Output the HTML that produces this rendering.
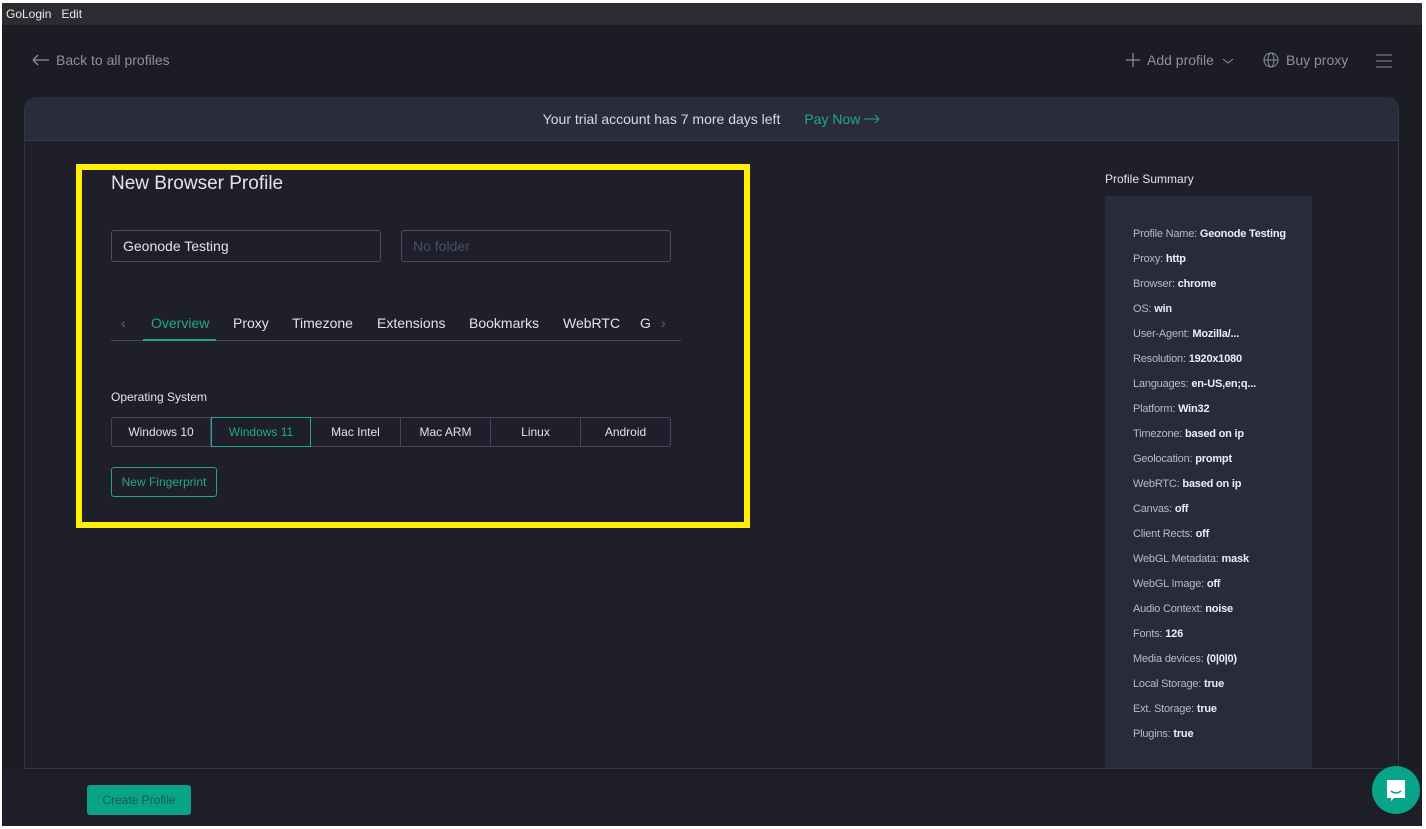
<!DOCTYPE html>
<html><head><meta charset="utf-8"><style>
*{margin:0;padding:0;box-sizing:border-box}
body{width:1426px;height:829px;overflow:hidden;background:#fff;font-family:"Liberation Sans",sans-serif;position:relative}
.app{position:absolute;left:2px;top:3px;width:1420px;height:823px;background:#1b1c24;overflow:hidden}
.tb{position:absolute;left:0;top:0;width:1420px;height:22px;background:#2b2c2f;color:#e8e8e8;font-size:12px;line-height:22px;padding-left:4px}
.tb span{margin-right:10px}
.a{position:absolute;color:#8e90a2;font-size:14px}
.card{position:absolute;left:22px;top:94px;width:1375px;height:672px;background:#1f1f2b;border:1px solid #33354a;border-top:none;border-radius:12px 12px 0 0}
.hd{position:absolute;left:0;top:0;width:100%;height:44px;background:#2a2c3b;border-bottom:1px solid #3a3c50;border-radius:12px 12px 0 0;text-align:center;color:#d8d9e0;font-size:14px;line-height:44px}
.hd b{font-weight:normal;color:#1fa88a;margin-left:24px}
.yel{position:absolute;left:74px;top:161px;width:674px;height:364px;border:6px solid #fff000}
.t{position:absolute;color:#e2e3ea}
.inp{position:absolute;height:32px;border:1px solid #4a4c60;border-radius:3px;font-size:14px;line-height:30px;padding-left:11px}
.tabs{position:absolute;left:111px;top:310px;width:570px;height:31px;border-bottom:1px solid #44465a;font-size:14px;color:#e2e3ea}
.tabs span{position:absolute;top:5px}
.os{position:absolute;left:111px;top:417px;width:560px;height:30px;border:1px solid #45475c;border-radius:3px;display:flex;font-size:12px;color:#e2e3ea}
.os div{border-right:1px solid #45475c;text-align:center;line-height:28px}
.sum{position:absolute;left:1105px;top:196px;width:207px;height:572px;background:#2a2b3a;font-size:11px;color:#b8bac6;letter-spacing:-0.2px}
.sum p{position:absolute;left:28px;white-space:nowrap}
.sum b{color:#eceef4}
.foot{position:absolute;left:0;top:766px;width:1420px;height:57px;background:#1e1e29}
</style></head><body><div class="app">
<div class="tb"><span>GoLogin</span><span>Edit</span></div>
<div class="a" style="left:30px;top:49px"><svg width="18" height="12" style="vertical-align:-1px;margin-right:6px"><path d="M1 6H17M1 6L6 1M1 6L6 11" stroke="#8e90a2" stroke-width="1.3" fill="none"/></svg>Back to all profiles</div>
<div class="a" style="left:1124px;top:49px"><svg width="14" height="14" style="vertical-align:-2px;margin-right:7px"><path d="M7 0V14M0 7H14" stroke="#8e90a2" stroke-width="1.2"/></svg>Add profile<svg width="12" height="8" style="margin-left:8px"><path d="M1 2L6 6L11 2" stroke="#8e90a2" fill="none"/></svg></div>
<div class="a" style="left:1261px;top:49px"><svg width="16" height="16" style="vertical-align:-3px;margin-right:7px"><circle cx="8" cy="8" r="7" stroke="#8e90a2" fill="none"/><ellipse cx="8" cy="8" rx="3" ry="7" stroke="#8e90a2" fill="none"/><path d="M1 8H15" stroke="#8e90a2"/></svg>Buy proxy</div>
<svg style="position:absolute;left:1374px;top:51px" width="16" height="14"><path d="M0 1H16M0 7H16M0 13H16" stroke="#8e90a2"/></svg>
<div class="card"><div class="hd">Your trial account has 7 more days left<b>Pay Now <svg width="16" height="10" style="vertical-align:0"><path d="M0 5H15M15 5L11 1M15 5L11 9" stroke="#1fa88a" fill="none"/></svg></b></div></div>
<div class="yel"></div>
<div class="t" style="left:109px;top:170px;font-size:19px">New Browser Profile</div>
<div class="inp" style="left:109px;top:227px;width:270px;color:#e2e3ea">Geonode Testing</div>
<div class="inp" style="left:399px;top:227px;width:270px;color:#4a4d6c">No folder</div>
<div class="tabs" style="left:109px;top:307px">
<span style="left:10px;color:#666">‹</span>
<span style="left:40px;color:#1fa88a">Overview</span><div style="position:absolute;left:32px;top:29px;width:73px;height:2px;background:#1fa88a"></div>
<span style="left:122px">Proxy</span><span style="left:181px">Timezone</span><span style="left:266px">Extensions</span><span style="left:358px">Bookmarks</span><span style="left:452px">WebRTC</span><span style="left:529px">G</span><span style="left:550px;color:#666">›</span></div>
<div class="t" style="left:109px;top:387px;font-size:12px">Operating System</div>
<div class="os" style="left:109px;top:414px">
<div style="width:99px">Windows 10</div><div style="width:100px;border:1px solid #1fa88a;color:#1fa88a;margin:-1px 0;line-height:28px">Windows 11</div><div style="width:90px">Mac Intel</div><div style="width:90px">Mac ARM</div><div style="width:90px">Linux</div><div style="width:89px;border:none">Android</div></div>
<div style="position:absolute;left:109px;top:464px;width:106px;height:30px;border:1px solid #1fa88a;border-radius:3px;color:#1fa88a;font-size:12px;line-height:28px;text-align:center">New Fingerprint</div>
<div class="t" style="left:1103px;top:169px;font-size:12px">Profile Summary</div>
<div class="sum" style="left:1103px;top:193px">
<p style="top:32px">Profile Name: <b>Geonode Testing</b></p>
<p style="top:57px">Proxy: <b>http</b></p>
<p style="top:82px">Browser: <b>chrome</b></p>
<p style="top:107px">OS: <b>win</b></p>
<p style="top:132px">User-Agent: <b>Mozilla/...</b></p>
<p style="top:157px">Resolution: <b>1920x1080</b></p>
<p style="top:182px">Languages: <b>en-US,en;q...</b></p>
<p style="top:207px">Platform: <b>Win32</b></p>
<p style="top:232px">Timezone: <b>based on ip</b></p>
<p style="top:257px">Geolocation: <b>prompt</b></p>
<p style="top:282px">WebRTC: <b>based on ip</b></p>
<p style="top:307px">Canvas: <b>off</b></p>
<p style="top:332px">Client Rects: <b>off</b></p>
<p style="top:357px">WebGL Metadata: <b>mask</b></p>
<p style="top:382px">WebGL Image: <b>off</b></p>
<p style="top:407px">Audio Context: <b>noise</b></p>
<p style="top:432px">Fonts: <b>126</b></p>
<p style="top:457px">Media devices: <b>(0|0|0)</b></p>
<p style="top:482px">Local Storage: <b>true</b></p>
<p style="top:507px">Ext. Storage: <b>true</b></p>
<p style="top:532px">Plugins: <b>true</b></p>
</div>
<div class="foot"></div>
<div style="position:absolute;left:85px;top:782px;width:104px;height:30px;background:#08a488;border-radius:3px;color:#1b5a4c;font-size:12px;line-height:30px;text-align:center">Create Profile</div>
<div style="position:absolute;left:1370px;top:763px;width:48px;height:48px;border-radius:50%;background:#08a488"><svg width="48" height="48"><path d="M15 14H33V32H22L19 35V32H15Z" fill="#fff"/><path d="M19 25Q24 29 29 25" stroke="#08a488" stroke-width="1.5" fill="none"/></svg></div>
</div></body></html>
